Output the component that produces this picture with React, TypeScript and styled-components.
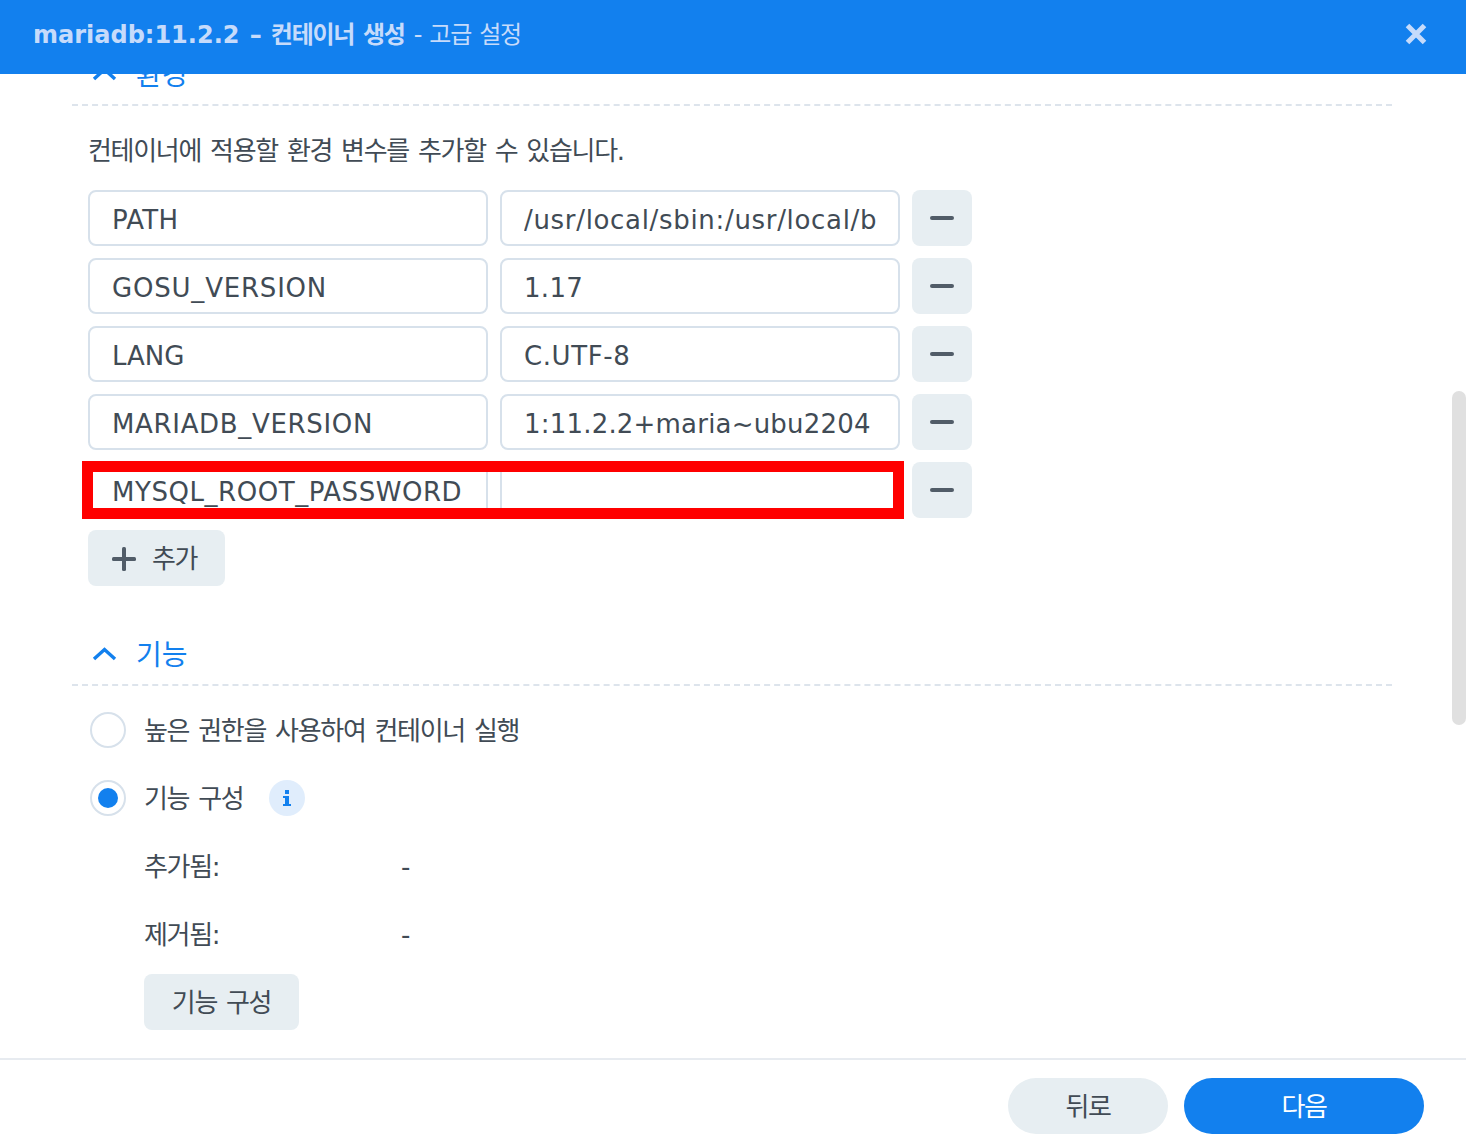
import React from "react";
import styled, { createGlobalStyle } from "styled-components";

const FONT = `"DejaVu Sans", "Noto Sans CJK KR", sans-serif`;

const GlobalStyle = createGlobalStyle`
  html, body {
    margin: 0;
    padding: 0;
    background: #fff;
  }
  * {
    box-sizing: border-box;
  }
`;

const Window = styled.div`
  position: relative;
  width: 1466px;
  height: 1144px;
  display: flex;
  flex-direction: column;
  overflow: hidden;
  background: #fff;
  font-family: ${FONT};
  font-size: 26px;
  line-height: 36px;
  letter-spacing: -1.3px;
  word-spacing: 2px;
  color: #414b55;
`;

const Header = styled.header`
  position: relative;
  z-index: 2;
  flex: 0 0 74px;
  display: flex;
  align-items: center;
  justify-content: space-between;
  padding: 0 39px 6px 33px;
  background: #1280ee;
  color: #c6dbfb;
`;

const Title = styled.div`
  padding-top: 2px;
  font-size: 24px;
  font-weight: 700;
  white-space: pre;
`;

const Version = styled.span`
  letter-spacing: 0;
`;

const SubTitle = styled.span`
  font-weight: 400;
`;

const CloseIcon = styled.svg`
  width: 22px;
  height: 22px;
  display: block;
`;

const Body = styled.main`
  flex: 1;
  overflow: hidden;
  padding: 0 74px 0 72px;
`;

const Section = styled.section<{ $first?: boolean }>`
  margin-top: ${(p) => (p.$first ? "-24px" : "44px")};
`;

const SectionHead = styled.div`
  height: 56px;
  display: flex;
  align-items: center;
  gap: 19px;
  padding: 0 0 6px 20px;
  border-bottom: 2px dashed #dde4ec;
  color: #1280ee;
  font-size: 28px;
  letter-spacing: 0;
`;

const SectionLabel = styled.span`
  padding-top: 4px;
`;

const Chevron = styled.svg`
  width: 25px;
  height: 14px;
  display: block;
`;

const EnvContent = styled.div`
  padding: 26px 0 0 16px;
`;

const Description = styled.p`
  margin: 0 0 22px;
  padding-top: 1px;
  height: 36px;
`;

const Rows = styled.div`
  display: flex;
  flex-direction: column;
  gap: 12px;
`;

const Row = styled.div`
  position: relative;
  display: flex;
  gap: 12px;
`;

const Field = styled.input<{ $tracking: number }>`
  width: 400px;
  height: 56px;
  padding: 3px 22px 0;
  border: 2px solid #d7e1eb;
  border-radius: 8px;
  outline: none;
  background: #fff;
  color: #414b55;
  font: inherit;
  letter-spacing: ${(p) => p.$tracking}px;
`;

const IconButton = styled.button`
  width: 60px;
  height: 56px;
  display: flex;
  align-items: center;
  justify-content: center;
  border: none;
  border-radius: 8px;
  background: #e7eef2;
  padding: 0;
`;

const Highlight = styled.div`
  position: absolute;
  left: -6px;
  top: -1px;
  width: 822px;
  height: 58px;
  border: 11px solid #ff0000;
  pointer-events: none;
`;

const Button = styled.button`
  height: 56px;
  display: inline-flex;
  align-items: center;
  justify-content: center;
  border: none;
  border-radius: 8px;
  background: #e7eef2;
  color: #414b55;
  font: inherit;
  letter-spacing: inherit;
  word-spacing: inherit;
  padding: 2px 28px 0;
`;

const AddButton = styled(Button)`
  margin-top: 12px;
  width: 137px;
  justify-content: flex-start;
  padding: 2px 0 0 24px;
  gap: 16px;
`;

const Options = styled.div`
  display: flex;
  flex-direction: column;
  gap: 32px;
  padding: 26px 0 0 18px;
`;

const OptionRow = styled.div`
  height: 36px;
  display: flex;
  align-items: center;
  gap: 18px;
`;

const OptionText = styled.span`
  padding-top: 2px;
`;

const Radio = styled.span<{ $checked?: boolean }>`
  width: 36px;
  height: 36px;
  border-radius: 50%;
  border: 2px solid #d7e1eb;
  display: flex;
  align-items: center;
  justify-content: center;
  &::after {
    content: "";
    display: ${(p) => (p.$checked ? "block" : "none")};
    width: 20px;
    height: 20px;
    border-radius: 50%;
    background: #1280ee;
  }
`;

const InfoBadge = styled.span`
  width: 36px;
  height: 36px;
  margin-left: 8px;
  border-radius: 50%;
  background: #e0edfc;
  display: flex;
  align-items: center;
  justify-content: center;
`;

const DetailRow = styled.div`
  height: 36px;
  display: flex;
  align-items: center;
  padding: 2px 0 0 54px;
`;

const DetailLabel = styled.span`
  width: 257px;
`;

const FeatureButton = styled(Button)`
  width: 155px;
  padding: 2px 0 0;
  margin: -10px 0 0 54px;
`;

const Footer = styled.footer`
  flex: 0 0 86px;
  display: flex;
  justify-content: flex-end;
  gap: 16px;
  padding: 18px 42px 0 0;
  border-top: 2px solid #e7ebf0;
  background: #fff;
`;

const PillButton = styled.button<{ $primary?: boolean }>`
  width: ${(p) => (p.$primary ? "240px" : "160px")};
  height: 56px;
  padding: 2px 0 0;
  border: none;
  border-radius: 28px;
  background: ${(p) => (p.$primary ? "#1280ee" : "#e7eef2")};
  color: ${(p) => (p.$primary ? "#fff" : "#414b55")};
  font: inherit;
  letter-spacing: inherit;
`;

const Scrollbar = styled.div`
  position: absolute;
  right: 0;
  top: 391px;
  width: 14px;
  height: 334px;
  border-radius: 7px;
  background: #e0e0e0;
`;

// DejaVu runs a little narrower than the original's font, so each value carries its own tracking
const envRows = [
  { name: "PATH", nameTrack: 0.25, value: "/usr/local/sbin:/usr/local/bin:/usr/sbin:/usr/bin:/sbin:/bin", valueTrack: 0.68 },
  { name: "GOSU_VERSION", nameTrack: 0.8, value: "1.17", valueTrack: 0.3 },
  { name: "LANG", nameTrack: 0, value: "C.UTF-8", valueTrack: 0.6 },
  { name: "MARIADB_VERSION", nameTrack: 0.67, value: "1:11.2.2+maria~ubu2204", valueTrack: 0.2 },
  { name: "MYSQL_ROOT_PASSWORD", nameTrack: 0.55, value: "", valueTrack: 0 },
];

const ChevronUp = () => (
  <Chevron viewBox="0 0 25 14" fill="none">
    <path d="M2 12 L12.5 2.5 L23 12" stroke="#1280ee" strokeWidth="3.4" />
  </Chevron>
);

const Minus = () => (
  <svg width="24" height="4" viewBox="0 0 24 4">
    <rect width="24" height="4" rx="2" fill="#515c68" />
  </svg>
);

const Plus = () => (
  <svg width="24" height="24" viewBox="0 0 24 24">
    <rect y="10" width="24" height="4" rx="1.5" fill="#515c68" />
    <rect x="10" width="4" height="24" rx="1.5" fill="#515c68" />
  </svg>
);

const InfoGlyph = () => (
  <svg width="8" height="16" viewBox="0 0 8 16">
    <path d="M2 0h4v4H2z M0 6h6v8h2v2H0v-2h2V8H0z" fill="#1280ee" />
  </svg>
);

function App() {
  return (
    <Window>
      <GlobalStyle />
      <Header>
        <Title>
          <Version>mariadb:11.2.2 –</Version> 컨테이너 생성 <SubTitle>- 고급 설정</SubTitle>
        </Title>
        <CloseIcon viewBox="0 0 22 22" fill="none">
          <path d="M2.5 2.5 L19.5 19.5 M19.5 2.5 L2.5 19.5" stroke="#c6dbfb" strokeWidth="5" />
        </CloseIcon>
      </Header>
      <Body>
        <Section $first>
          <SectionHead>
            <ChevronUp />
            <SectionLabel>환경</SectionLabel>
          </SectionHead>
          <EnvContent>
            <Description>컨테이너에 적용할 환경 변수를 추가할 수 있습니다.</Description>
            <Rows>
              {envRows.map((row) => (
                <Row key={row.name}>
                  <Field readOnly value={row.name} $tracking={row.nameTrack} />
                  <Field readOnly value={row.value} $tracking={row.valueTrack} />
                  <IconButton>
                    <Minus />
                  </IconButton>
                  {row.name === "MYSQL_ROOT_PASSWORD" && <Highlight />}
                </Row>
              ))}
            </Rows>
            <AddButton>
              <Plus />
              추가
            </AddButton>
          </EnvContent>
        </Section>
        <Section>
          <SectionHead>
            <ChevronUp />
            <SectionLabel>기능</SectionLabel>
          </SectionHead>
          <Options>
            <OptionRow>
              <Radio />
              <OptionText>높은 권한을 사용하여 컨테이너 실행</OptionText>
            </OptionRow>
            <OptionRow>
              <Radio $checked />
              <OptionText>기능 구성</OptionText>
              <InfoBadge>
                <InfoGlyph />
              </InfoBadge>
            </OptionRow>
            <DetailRow>
              <DetailLabel>추가됨:</DetailLabel>-
            </DetailRow>
            <DetailRow>
              <DetailLabel>제거됨:</DetailLabel>-
            </DetailRow>
            <FeatureButton>기능 구성</FeatureButton>
          </Options>
        </Section>
      </Body>
      <Footer>
        <PillButton>뒤로</PillButton>
        <PillButton $primary>다음</PillButton>
      </Footer>
      <Scrollbar />
    </Window>
  );
}

export default App;
